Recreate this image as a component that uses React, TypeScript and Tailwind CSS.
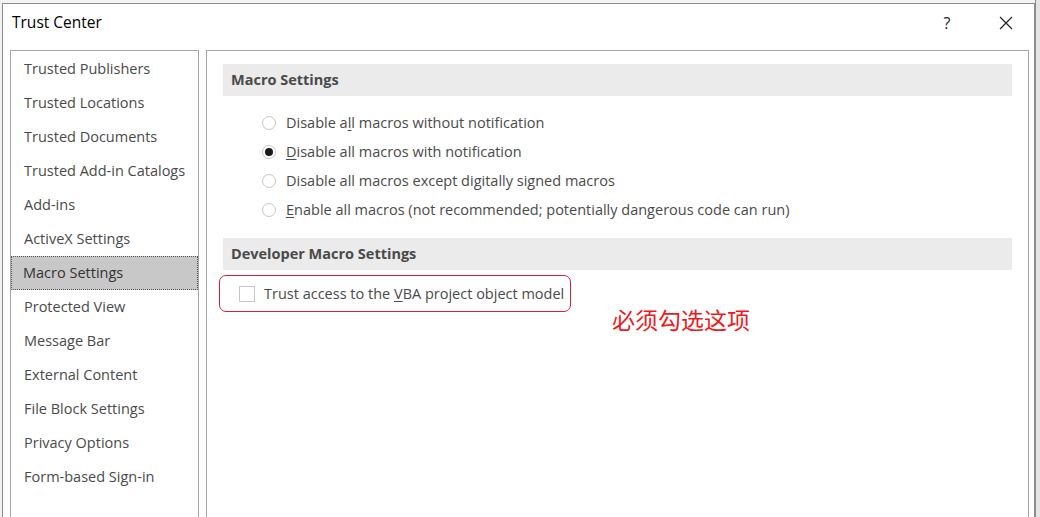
const navItems = [
  "Trusted Publishers",
  "Trusted Locations",
  "Trusted Documents",
  "Trusted Add-in Catalogs",
  "Add-ins",
  "ActiveX Settings",
  "Macro Settings",
  "Protected View",
  "Message Bar",
  "External Content",
  "File Block Settings",
  "Privacy Options",
  "Form-based Sign-in",
];

const font = "font-['Segoe_UI','Open_Sans','Noto_Sans',sans-serif]";

// label split around the access-key letter
const macroOptions = [
  { pre: "Disable a", key: "l", post: "l macros without notification", checked: false },
  { pre: "", key: "D", post: "isable all macros with notification", checked: true },
  { pre: "Disable all macros except di", key: "g", post: "itally signed macros", checked: false },
  { pre: "", key: "E", post: "nable all macros (not recommended; potentially dangerous code can run)", checked: false },
];

function Radio({ checked }: { checked: boolean }) {
  return (
    <span className="w-[14px] h-[14px] rounded-full border border-[#c6c6c6] bg-white flex items-center justify-center shrink-0">
      {checked && <span className="w-[8px] h-[8px] rounded-full bg-[#1a1a1a]" />}
    </span>
  );
}

function SectionHeader({ title }: { title: string }) {
  return (
    <div className="h-[32px] bg-[#ebebeb] flex items-center pl-[8px] text-[14.5px] font-bold text-[#4a4a4a]">
      {title}
    </div>
  );
}

export default function App() {
  return (
    <div className={`w-[1040px] h-[517px] overflow-hidden bg-[#f3f3f3] flex ${font}`}>
      <div className="flex-1 pt-[3px] pl-[2px] flex">
        <div className="flex-1 bg-white border-l border-t border-r border-[#8c8c8c] flex flex-col">
          {/* Title bar */}
          <div className="h-[37px] flex items-center pl-[9px] shrink-0">
            <span className="text-[15.5px] text-black">Trust Center</span>
            <span className="ml-auto text-[16px] text-[#222] w-[20px] text-center mr-[42px]">?</span>
            <svg width="14" height="14" viewBox="0 0 14 14" className="mr-[21px]">
              <path d="M1 1 L13 13 M13 1 L1 13" stroke="#222" strokeWidth="1.2" />
            </svg>
          </div>

          {/* Body */}
          <div className="flex-1 flex pt-[9px] pl-[7px] pr-[5px] gap-[7px]">
            {/* Left nav */}
            <div className="w-[189px] border-l border-t border-r border-[#a6a6a6] pt-[1px]">
              {navItems.map((item) => (
                <div
                  key={item}
                  className={
                    item === "Macro Settings"
                      ? "h-[34px] flex items-center pl-[11px] text-[14.5px] text-[#333] bg-[#c8c8c8] border border-dotted border-[#555]"
                      : "h-[34px] flex items-center pl-[12px] text-[14.5px] text-[#4a4a4a] border border-transparent"
                  }
                >
                  {item}
                </div>
              ))}
            </div>

            {/* Right panel */}
            <div className="flex-1 border-l border-t border-r border-[#a6a6a6] pt-[13px] px-[16px]">
              <SectionHeader title="Macro Settings" />
              <div className="pt-[12px] pb-[14px] pl-[39px] flex flex-col">
                {macroOptions.map((o, i) => (
                  <div key={i} className="h-[29px] flex items-center gap-[10px] text-[14.5px] text-[#4a4a4a]">
                    <Radio checked={o.checked} />
                    <span>
                      {o.pre}
                      <span className="underline underline-offset-2">{o.key}</span>
                      {o.post}
                    </span>
                  </div>
                ))}
              </div>
              <SectionHeader title="Developer Macro Settings" />
              <div className="flex items-start">
                <div className="mt-[5px] -ml-[4px] w-[352px] h-[37px] rounded-[7px] border border-[#d4213a] flex items-center pl-[19px] gap-[9px] text-[14.5px] text-[#4a4a4a]">
                  <span className="w-[16px] h-[16px] border border-[#c6c6c6] bg-white shrink-0" />
                  <span>
                    Trust access to the <span className="underline underline-offset-2">V</span>BA project object model
                  </span>
                </div>
                <span className="ml-[41px] mt-[38px] text-[23px] leading-none text-[#f01820] font-['Noto_Sans_CJK_SC',sans-serif]">
                  必须勾选这项
                </span>
              </div>
            </div>
          </div>
        </div>
      </div>
      <div className="w-[5px] border-l border-[#8c8c8c] bg-[#e4e4e4]" />
    </div>
  );
}
